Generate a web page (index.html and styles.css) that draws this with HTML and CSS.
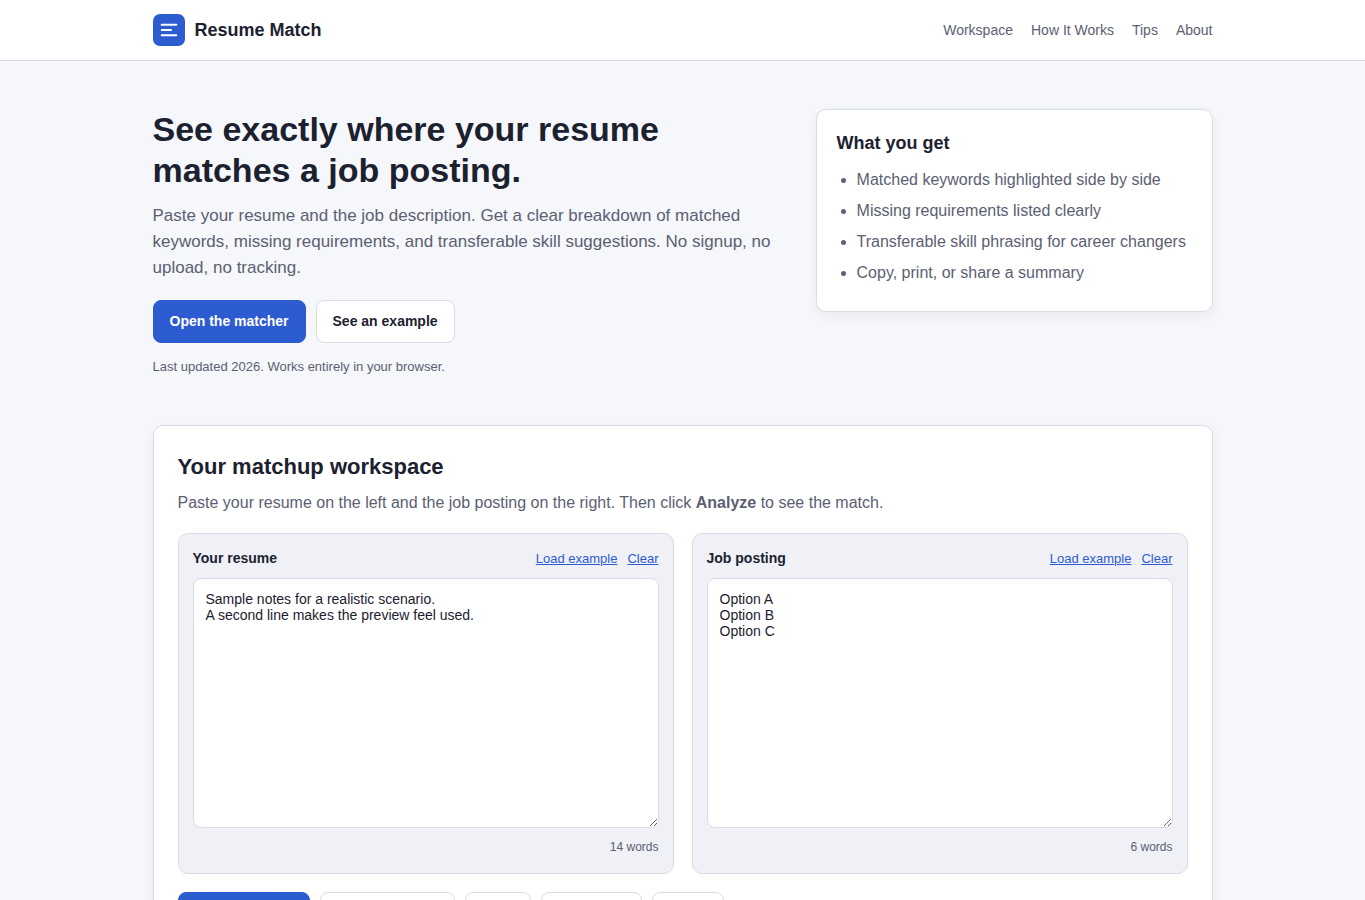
FILE: index.html
```
<!DOCTYPE html>
<html lang="en">
<head>
    <meta charset="UTF-8">
    <meta name="viewport" content="width=device-width, initial-scale=1.0">
    <title>Resume Match</title>
    <link rel="stylesheet" href="styles.css">
</head>
<body>
    <header class="site-header">
        <div class="container header-inner">
            <a href="#" class="brand">
                <svg class="logo" viewBox="0 0 32 32" aria-hidden="true">
                    <rect width="32" height="32" rx="7" fill="#2d5bd0"/>
                    <path d="M8.7 10.7h14.6M8.7 16h9.3M8.7 21.3h14.6" stroke="#fff" stroke-width="2" stroke-linecap="round"/>
                </svg>
                <span>Resume Match</span>
            </a>
            <nav class="nav">
                <a href="#workspace">Workspace</a>
                <a href="#how">How It Works</a>
                <a href="#tips">Tips</a>
                <a href="#about">About</a>
            </nav>
        </div>
    </header>

    <main class="container">
        <!-- Hero -->
        <section class="hero">
            <div>
                <h1>See exactly where your resume matches a job posting.</h1>
                <p class="lead">Paste your resume and the job description. Get a clear breakdown of matched keywords, missing requirements, and transferable skill suggestions. No signup, no upload, no tracking.</p>
                <div class="btn-row">
                    <button type="button" class="btn btn-primary">Open the matcher</button>
                    <button type="button" class="btn">See an example</button>
                </div>
                <p class="note">Last updated 2026. Works entirely in your browser.</p>
            </div>
            <aside class="card benefits">
                <h3>What you get</h3>
                <ul>
                    <li>Matched keywords highlighted side by side</li>
                    <li>Missing requirements listed clearly</li>
                    <li>Transferable skill phrasing for career changers</li>
                    <li>Copy, print, or share a summary</li>
                </ul>
            </aside>
        </section>

        <!-- Workspace -->
        <section class="card workspace" id="workspace">
            <h2>Your matchup workspace</h2>
            <p class="intro">Paste your resume on the left and the job posting on the right. Then click <strong>Analyze</strong> to see the match.</p>
            <div class="panels">
                <div class="panel">
                    <div class="panel-head">
                        <label for="resume">Your resume</label>
                        <div class="panel-actions">
                            <button type="button" class="link-btn">Load example</button>
                            <button type="button" class="link-btn">Clear</button>
                        </div>
                    </div>
                    <textarea id="resume">Sample notes for a realistic scenario.
A second line makes the preview feel used.</textarea>
                    <div class="word-count">14 words</div>
                </div>
                <div class="panel">
                    <div class="panel-head">
                        <label for="job">Job posting</label>
                        <div class="panel-actions">
                            <button type="button" class="link-btn">Load example</button>
                            <button type="button" class="link-btn">Clear</button>
                        </div>
                    </div>
                    <textarea id="job">Option A
Option B
Option C</textarea>
                    <div class="word-count">6 words</div>
                </div>
            </div>
            <div class="btn-row">
                <button type="button" class="btn btn-primary">Analyze match</button>
                <button type="button" class="btn">Copy summary</button>
                <button type="button" class="btn">Print</button>
                <button type="button" class="btn">Share link</button>
                <button type="button" class="btn">Reset</button>
            </div>
        </section>
    </main>
</body>
</html>
```
FILE: styles.css
```
:root {
    --bg: #f5f7fb;
    --surface: #ffffff;
    --surface-alt: #eff1f7;
    --text: #1c2130;
    --muted: #5b6072;
    --border: #d8dce4;
    --accent: #2d5bd0;
    --radius: 10px;
}

* {
    box-sizing: border-box;
}

body {
    margin: 0;
    font-family: "Liberation Sans", Arial, sans-serif;
    font-size: 16px;
    line-height: 25px;
    color: var(--text);
    background: var(--bg);
}

h1, h2, h3, p {
    margin: 0;
}

.container {
    max-width: 1100px;
    margin: 0 auto;
    padding: 0 20px;
}

/* Header */
.site-header {
    background: var(--surface);
    border-bottom: 1px solid var(--border);
}

.header-inner {
    display: flex;
    align-items: center;
    justify-content: space-between;
    padding-top: 14px;
    padding-bottom: 14px;
}

.brand {
    display: flex;
    align-items: center;
    gap: 10px;
    font-size: 18px;
    line-height: 28px;
    font-weight: bold;
    color: var(--text);
    text-decoration: none;
}

.logo {
    width: 32px;
    height: 32px;
}

.nav {
    display: flex;
    flex-wrap: wrap;
    gap: 18px;
    font-size: 14px;
    line-height: 21px;
}

.nav a {
    color: var(--muted);
    text-decoration: none;
}

.nav a:hover {
    color: var(--accent);
}

/* Hero */
.hero {
    display: grid;
    grid-template-columns: 1.6fr 1fr;
    gap: 28px;
    align-items: start;
    padding: 48px 0;
}

h1 {
    font-size: 34px;
    line-height: 41px;
    margin-bottom: 12px;
}

.lead {
    font-size: 17px;
    line-height: 26px;
    color: var(--muted);
    margin-bottom: 19px;
}

.note {
    font-size: 13px;
    line-height: 20px;
    color: var(--muted);
    margin-top: 14px;
}

.card {
    background: var(--surface);
    border: 1px solid var(--border);
    border-radius: var(--radius);
    box-shadow: 0 4px 12px rgba(28, 33, 48, 0.06);
}

.benefits {
    padding: 20px;
}

.benefits h3 {
    font-size: 18px;
    line-height: 27px;
    margin-bottom: 10px;
}

.benefits ul {
    margin: 0;
    padding-left: 20px;
    color: var(--muted);
}

.benefits li {
    margin-bottom: 6px;
}

/* Buttons */
.btn-row {
    display: flex;
    flex-wrap: wrap;
    gap: 10px;
}

.btn {
    padding: 10px 16px;
    border: 1px solid var(--border);
    border-radius: 8px;
    background: var(--surface);
    color: var(--text);
    font-family: inherit;
    font-size: 14px;
    font-weight: bold;
    line-height: 21px;
    cursor: pointer;
}

.btn-primary {
    background: var(--accent);
    border-color: var(--accent);
    color: #fff;
}

/* Workspace */
.workspace {
    padding: 24px;
    margin-bottom: 48px;
}

.workspace h2 {
    font-size: 22px;
    line-height: 34px;
    margin-bottom: 6px;
}

.intro {
    color: var(--muted);
    margin-bottom: 18px;
}

.panels {
    display: grid;
    grid-template-columns: 1fr 1fr;
    gap: 18px;
    margin-bottom: 18px;
}

.panel {
    background: var(--surface-alt);
    border: 1px solid var(--border);
    border-radius: var(--radius);
    padding: 14px 14px 16px;
}

.panel-head {
    display: flex;
    align-items: flex-start;
    justify-content: space-between;
    margin-bottom: 8px;
}

.panel-head label {
    font-size: 14px;
    font-weight: bold;
    line-height: 20px;
}

.panel-actions {
    display: flex;
    gap: 10px;
}

.link-btn {
    padding: 0;
    border: none;
    background: none;
    color: var(--accent);
    font-family: inherit;
    font-size: 13px;
    line-height: 22px;
    text-decoration: underline;
    cursor: pointer;
}

textarea {
    display: block;
    width: 100%;
    height: 250px;
    padding: 12px;
    border: 1px solid var(--border);
    border-radius: 8px;
    background: var(--surface);
    color: var(--text);
    font-family: inherit;
    font-size: 14px;
    resize: vertical;
}

.word-count {
    margin-top: 10px;
    font-size: 12px;
    line-height: 19px;
    color: var(--muted);
    text-align: right;
}

@media (max-width: 767px) {
    .hero,
    .panels {
        grid-template-columns: 1fr;
    }
}
```
